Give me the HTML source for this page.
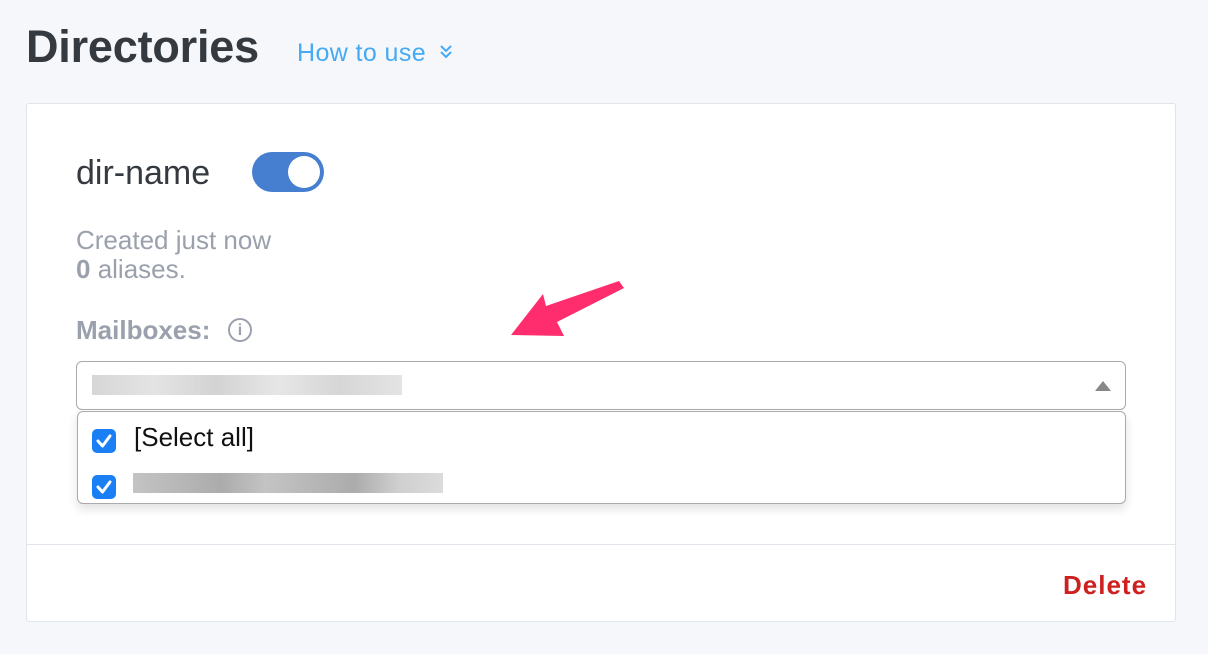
<!DOCTYPE html>
<html><head><style>
body{margin:0;width:1208px;height:654px;background:#f5f7fb;font-family:"Liberation Sans",sans-serif;position:relative;overflow:hidden}
.a{position:absolute}
</style></head><body>
<div class="a" style="left:26px;top:21px;font-size:45px;color:#343a40;font-weight:bold;letter-spacing:-0.2px">Directories</div>
<div class="a" style="left:297px;top:39px;font-size:25px;color:#45aaf2;letter-spacing:0.4px">How to use</div>
<svg class="a" style="left:439px;top:44px" width="14" height="16" viewBox="0 0 14 16"><path d="M2 2 L7 7 L12 2 M2 8 L7 13 L12 8" fill="none" stroke="#45aaf2" stroke-width="2"/></svg>
<div class="a" style="left:26px;top:103px;width:1148px;height:517px;background:#fff;border:1px solid #e0e5ec;border-radius:3px"></div>
<div class="a" style="left:27px;top:544px;width:1148px;height:1px;background:#e0e5ec"></div>
<div class="a" style="left:76px;top:154px;font-size:34px;color:#343a40">dir-name</div>
<div class="a" style="left:252px;top:152px;width:72px;height:40px;border-radius:20px;background:#467fcf"></div>
<div class="a" style="left:288px;top:156px;width:32px;height:32px;border-radius:50%;background:#fff"></div>
<div class="a" style="left:76px;top:226px;font-size:26px;color:#9aa0ac;line-height:29px">Created just now<br><b>0</b> aliases.</div>
<div class="a" style="left:76px;top:315px;font-size:26px;color:#9aa0ac;font-weight:bold">Mailboxes:</div>
<div class="a" style="left:228px;top:318px;width:24px;height:24px;border:2px solid #9aa0ac;border-radius:50%;color:#9aa0ac;font-size:16px;text-align:center;line-height:21px;box-sizing:border-box;font-weight:bold">i</div>
<div class="a" style="left:76px;top:361px;width:1050px;height:49px;border:1.5px solid #aaa;border-radius:6px;box-sizing:border-box;background:#fff"></div>
<div class="a" style="left:92px;top:375px;width:310px;height:20px;background:linear-gradient(90deg,#ccc,#ddd,#c8c8c8,#e0e0e0,#ccc,#ddd);opacity:.8"></div>
<div class="a" style="left:1095px;top:381px;width:0;height:0;border-left:8px solid transparent;border-right:8px solid transparent;border-bottom:10px solid #888"></div>
<div class="a" style="left:77px;top:411px;width:1049px;height:93px;border:1.5px solid #aaa;border-radius:6px;box-sizing:border-box;background:#fff;box-shadow:0 5px 10px rgba(0,0,0,.12)"></div>
<div class="a" style="left:92px;top:429px;width:24px;height:24px;background:#1a7ff5;border-radius:5px"><svg width="24" height="24"><path d="M6 12 L10.5 17 L18 7" fill="none" stroke="#fff" stroke-width="3" stroke-linecap="round" stroke-linejoin="round"/></svg></div>
<div class="a" style="left:92px;top:475px;width:24px;height:24px;background:#1a7ff5;border-radius:5px"><svg width="24" height="24"><path d="M6 12 L10.5 17 L18 7" fill="none" stroke="#fff" stroke-width="3" stroke-linecap="round" stroke-linejoin="round"/></svg></div>
<div class="a" style="left:134px;top:422px;font-size:26px;color:#111">[Select all]</div>
<div class="a" style="left:133px;top:473px;width:310px;height:20px;background:linear-gradient(90deg,#aaa,#999,#888,#aaa,#999,#888,#bbb,#ccc);opacity:.7"></div>
<div class="a" style="left:1063px;top:570px;font-size:26px;color:#cd201f;font-weight:bold;letter-spacing:1px">Delete</div>
<svg class="a" style="left:0;top:0" width="1208" height="654"><polygon points="511,335 543,294 546,306 619,281 624,288 557,322 564,336" fill="#ff2d6d"/></svg>
</body></html>
